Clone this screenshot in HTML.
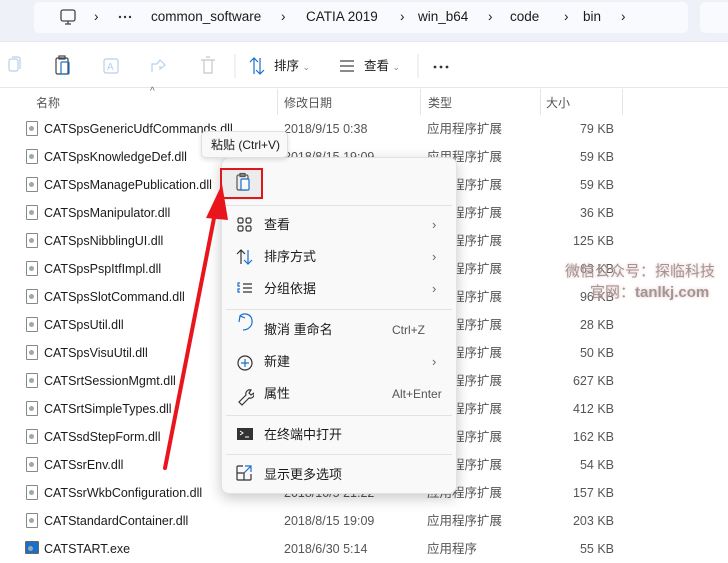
<!DOCTYPE html>
<html><head><meta charset="utf-8"><style>
*{margin:0;padding:0;box-sizing:border-box}
body{width:728px;height:556px;overflow:hidden;background:#fff;font-family:"Liberation Sans","Noto Sans CJK SC",sans-serif;font-size:12.5px;line-height:16px;color:#1a1a1a;position:relative}
.abs{position:absolute}
.top{left:0;top:0;width:728px;height:41px;background:#eef2f8}
.addr{left:34px;top:2px;width:654px;height:31px;background:#f8fafd;border-radius:5px}
.srch{left:700px;top:2px;width:40px;height:31px;background:#f8fafd;border-radius:5px}
.crumb{top:9px;font-size:13.5px;color:#1a1a1a}
.tb{left:0;top:41px;width:728px;height:47px;background:#fff;border-top:1px solid #e3e6ea;border-bottom:1px solid #e3e6ea}
.hdr{top:95px;color:#555;font-size:12px}
.vl{top:89px;width:1px;height:26px;background:#e5e5e5}
.row{left:0;height:28px;width:728px}
.row .ic{position:absolute;left:26px;top:6px;width:12px;height:15px;border:1px solid #888;border-radius:1px;background:#fff}
.row .ic:after{content:"";position:absolute;left:2px;top:4px;width:5px;height:5px;border-radius:50%;background:#9aa}
.row .n{position:absolute;left:44px;top:6px;font-size:12.5px}
.row .d{position:absolute;left:284px;top:6px;color:#555}
.row .t{position:absolute;left:427px;top:7px;color:#555;line-height:14px}
.row .s{position:absolute;right:114px;top:6px;color:#555}
.menu{left:221px;top:157px;width:236px;height:337px;background:#f9f9f9;border-radius:8px;box-shadow:0 4px 14px rgba(0,0,0,.22);border:1px solid #e2e2e2}
.mi{position:absolute;left:42px;font-size:13px;color:#1a1a1a;line-height:14px}
.mk{position:absolute;left:170px;font-size:12px;color:#555}
.ch{position:absolute;left:210px;color:#666;font-size:13px}
.sep{position:absolute;left:4px;width:226px;height:1px;background:#e2e2e2}
.tip{left:201px;top:131px;width:87px;height:27px;background:#f9f9f9;border:1px solid #e0e0e0;border-radius:5px;font-size:12px;line-height:14px;padding:6px 0 0 9px;box-shadow:0 2px 5px rgba(0,0,0,.12)}
.wm{color:#999;font-size:15px;line-height:18px;text-shadow:0 0 3px #f8b8b8}
</style></head><body>
<div class="abs top"></div>
<div class="abs addr"></div><div class="abs srch"></div>
<svg class="abs" style="left:58px;top:7px" width="20" height="20" viewBox="0 0 20 20"><rect x="3" y="3" width="14" height="11" rx="2" fill="none" stroke="#444" stroke-width="1.3"/><path d="M10 14v3M7 17h6" stroke="#444" stroke-width="1.3"/></svg>
<span class="abs crumb" style="left:94px">›</span>
<svg class="abs" style="left:118px;top:15px" width="16" height="4"><circle cx="2" cy="2" r="1.2" fill="#333"/><circle cx="7" cy="2" r="1.2" fill="#333"/><circle cx="12" cy="2" r="1.2" fill="#333"/></svg>
<span class="abs crumb" style="left:151px">common_software</span>
<span class="abs crumb" style="left:281px">›</span>
<span class="abs crumb" style="left:306px">CATIA 2019</span>
<span class="abs crumb" style="left:400px">›</span>
<span class="abs crumb" style="left:418px">win_b64</span>
<span class="abs crumb" style="left:488px">›</span>
<span class="abs crumb" style="left:510px">code</span>
<span class="abs crumb" style="left:564px">›</span>
<span class="abs crumb" style="left:583px">bin</span>
<span class="abs crumb" style="left:621px">›</span>
<div class="abs tb"></div>
<svg class="abs" style="left:0;top:52px" width="460" height="28" viewBox="0 0 460 28">
<g fill="none" stroke-width="1.2">
<rect x="9" y="7" width="9" height="12" rx="2" stroke="#b8d0ea"/><path d="M12 5h6a2 2 0 0 1 2 2v10" stroke="#b8d0ea"/>
<rect x="56" y="6" width="12" height="16" rx="1.5" stroke="#444"/><rect x="61" y="10" width="8" height="12" rx="1" stroke="#1a6fc9"/><rect x="59" y="4" width="6" height="3" stroke="#444"/>
<rect x="104" y="7" width="14" height="14" rx="2" stroke="#b8d0ea"/><text x="107" y="18" font-size="10" fill="#b8d0ea" stroke="none">A</text>
<path d="M152 20v-8h5M157 12l3-4 5 5-5 4v-3" stroke="#b8d0ea"/>
<path d="M201 8h14M204 8v13h8V8M206 5h4" stroke="#c8c8c8"/>
<path d="M254 6v16M250 10l4-4 4 4M260 6v16M256 18l4 4 4-4" stroke="#1a6fc9"/>
<path d="M340 9h14M340 14h14M340 19h14" stroke="#444"/>
</g>
<line x1="235" y1="2" x2="235" y2="26" stroke="#e3e3e3"/>
<line x1="418" y1="2" x2="418" y2="26" stroke="#e3e3e3"/>
<circle cx="435" cy="15" r="1.4" fill="#333"/><circle cx="441" cy="15" r="1.4" fill="#333"/><circle cx="447" cy="15" r="1.4" fill="#333"/>
</svg>
<span class="abs" style="left:274px;top:59px;font-size:12.5px;line-height:14px">排序 <span style="color:#888;font-size:9px">⌄</span></span>
<span class="abs" style="left:364px;top:59px;font-size:12.5px;line-height:14px">查看 <span style="color:#888;font-size:9px">⌄</span></span>
<span class="abs" style="left:150px;top:84px;color:#666;font-size:10px">^</span>
<span class="abs hdr" style="left:36px">名称</span>
<span class="abs hdr" style="left:284px">修改日期</span>
<span class="abs hdr" style="left:428px">类型</span>
<span class="abs hdr" style="left:546px">大小</span>
<div class="abs vl" style="left:277px"></div><div class="abs vl" style="left:420px"></div><div class="abs vl" style="left:540px"></div><div class="abs vl" style="left:622px"></div>

<div class="abs row" style="top:115px"><i class="ic"></i><span class="n">CATSpsGenericUdfCommands.dll</span><span class="d">2018/9/15 0:38</span><span class="t">应用程序扩展</span><span class="s">79 KB</span></div>
<div class="abs row" style="top:143px"><i class="ic"></i><span class="n">CATSpsKnowledgeDef.dll</span><span class="d">2018/8/15 19:09</span><span class="t">应用程序扩展</span><span class="s">59 KB</span></div>
<div class="abs row" style="top:171px"><i class="ic"></i><span class="n">CATSpsManagePublication.dll</span><span class="t">应用程序扩展</span><span class="s">59 KB</span></div>
<div class="abs row" style="top:199px"><i class="ic"></i><span class="n">CATSpsManipulator.dll</span><span class="t">应用程序扩展</span><span class="s">36 KB</span></div>
<div class="abs row" style="top:227px"><i class="ic"></i><span class="n">CATSpsNibblingUI.dll</span><span class="t">应用程序扩展</span><span class="s">125 KB</span></div>
<div class="abs row" style="top:255px"><i class="ic"></i><span class="n">CATSpsPspItfImpl.dll</span><span class="t">应用程序扩展</span><span class="s">63 KB</span></div>
<div class="abs row" style="top:283px"><i class="ic"></i><span class="n">CATSpsSlotCommand.dll</span><span class="t">应用程序扩展</span><span class="s">96 KB</span></div>
<div class="abs row" style="top:311px"><i class="ic"></i><span class="n">CATSpsUtil.dll</span><span class="t">应用程序扩展</span><span class="s">28 KB</span></div>
<div class="abs row" style="top:339px"><i class="ic"></i><span class="n">CATSpsVisuUtil.dll</span><span class="t">应用程序扩展</span><span class="s">50 KB</span></div>
<div class="abs row" style="top:367px"><i class="ic"></i><span class="n">CATSrtSessionMgmt.dll</span><span class="t">应用程序扩展</span><span class="s">627 KB</span></div>
<div class="abs row" style="top:395px"><i class="ic"></i><span class="n">CATSrtSimpleTypes.dll</span><span class="t">应用程序扩展</span><span class="s">412 KB</span></div>
<div class="abs row" style="top:423px"><i class="ic"></i><span class="n">CATSsdStepForm.dll</span><span class="t">应用程序扩展</span><span class="s">162 KB</span></div>
<div class="abs row" style="top:451px"><i class="ic"></i><span class="n">CATSsrEnv.dll</span><span class="t">应用程序扩展</span><span class="s">54 KB</span></div>
<div class="abs row" style="top:479px"><i class="ic"></i><span class="n">CATSsrWkbConfiguration.dll</span><span class="d">2018/10/5 21:22</span><span class="t">应用程序扩展</span><span class="s">157 KB</span></div>
<div class="abs row" style="top:507px"><i class="ic"></i><span class="n">CATStandardContainer.dll</span><span class="d">2018/8/15 19:09</span><span class="t">应用程序扩展</span><span class="s">203 KB</span></div>
<div class="abs row" style="top:535px"><i class="ic" style="border-color:#666;background:#1a6fc9;left:25px;width:14px;height:13px"></i><span class="n">CATSTART.exe</span><span class="d">2018/6/30 5:14</span><span class="t">应用程序</span><span class="s">55 KB</span></div>

<div class="abs wm" style="left:565px;top:263px">微信公众号：探临科技</div>
<div class="abs wm" style="left:590px;top:284px">官网：<b>tanlkj.com</b></div>

<div class="abs menu">
<div style="position:absolute;left:0;top:11px;width:41px;height:31px;background:#ececec;border-radius:4px"></div>
<svg style="position:absolute;left:12px;top:14px" width="20" height="22" viewBox="0 0 20 22"><g fill="none" stroke-width="1.2"><rect x="3" y="3" width="11" height="15" rx="1.5" stroke="#555"/><rect x="7" y="7" width="8" height="11" rx="1" stroke="#1a6fc9" fill="#f9f9f9"/><rect x="6" y="1.5" width="5" height="3" stroke="#555"/></g></svg>
<div class="sep" style="top:47px"></div>
<svg style="position:absolute;left:14px;top:58px" width="18" height="240" viewBox="0 0 18 240"><g fill="none" stroke-width="1.2">
<rect x="2" y="2" width="5" height="5" rx="1.5" stroke="#333"/><rect x="10" y="2" width="5" height="5" rx="1.5" stroke="#333"/><rect x="2" y="10" width="5" height="5" rx="1.5" stroke="#333"/><rect x="10" y="10" width="5" height="5" rx="1.5" stroke="#333"/>
<path d="M5 34V48M1 38l4-4 4 4" stroke="#333"/><path d="M12 34V48M8 44l4 4 4-4" stroke="#1a6fc9"/>
<path d="M4 67H2v3h2M4 73H2v3h2" stroke="#1a6fc9"/><path d="M7 68h9M7 72h9M7 76h9" stroke="#333"/>
<path d="M3 106l1-6 5 2M4 100c4-4 11-2 12 4s-4 10-9 10" stroke="#1a6fc9"/>
<circle cx="9" cy="147" r="7" stroke="#333"/><path d="M9 143v8M5 147h8" stroke="#1a6fc9"/>
<path d="M3 186l7-7a4 4 0 0 1 5-5l-2 3 2 2 3-2a4 4 0 0 1-5 5l-7 7z" stroke="#333"/>
</g><rect x="1" y="212" width="16" height="12" fill="#333"/><path d="M4 215l3 2-3 2M9 221h4" stroke="#fff" fill="none"/></svg>
<div class="mi" style="top:60px">查看</div><div class="ch" style="top:59px">›</div>
<div class="mi" style="top:92px">排序方式</div><div class="ch" style="top:91px">›</div>
<div class="mi" style="top:124px">分组依据</div><div class="ch" style="top:123px">›</div>
<div class="sep" style="top:151px"></div>
<div class="mi" style="top:165px">撤消 重命名</div><div class="mk" style="top:164px">Ctrl+Z</div>
<div class="mi" style="top:197px">新建</div><div class="ch" style="top:196px">›</div>
<div class="mi" style="top:229px">属性</div><div class="mk" style="top:228px">Alt+Enter</div>
<div class="sep" style="top:257px"></div>
<div class="mi" style="top:270px">在终端中打开</div>
<div class="sep" style="top:296px"></div>
<svg style="position:absolute;left:13px;top:306px" width="18" height="18" viewBox="0 0 18 18"><g fill="none" stroke-width="1.2"><path d="M8 2H3a1 1 0 0 0-1 1v12a1 1 0 0 0 1 1h12a1 1 0 0 0 1-1v-5" stroke="#333"/><path d="M2 9h7v7" stroke="#333"/><path d="M10 2h6v6M16 2l-7 7" stroke="#1a6fc9"/></g></svg>
<div class="mi" style="top:310px">显示更多选项</div>
</div>
<div class="abs" style="left:220px;top:168px;width:43px;height:31px;border:2px solid #e0161b"></div>
<div class="abs tip">粘贴 (Ctrl+V)</div>
<svg class="abs" style="left:150px;top:180px" width="80" height="300" viewBox="0 0 80 300"><path d="M15 288L66 28" stroke="#e8161c" stroke-width="4" stroke-linecap="round"/><path d="M72 4L56 38L78 40Z" fill="#e8161c"/></svg>
</body></html>
